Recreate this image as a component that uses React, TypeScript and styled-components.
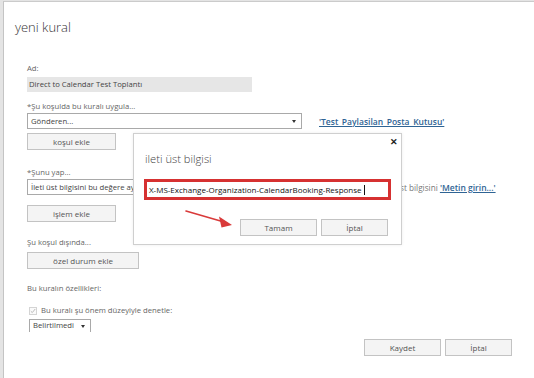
import React from 'react';
import styled, { createGlobalStyle } from 'styled-components';

const Global = createGlobalStyle`
  html, body, #root { height: 100%; margin: 0; }
  body {
    background: #e4e4e4;
    font-family: 'Open Sans', 'Noto Sans', sans-serif;
    overflow: hidden;
    color: #333;
  }
  * { box-sizing: border-box; }
`;

const Frame = styled.div`
  position: relative;
  height: calc(100% - 1px);
  margin: 1px 0 0 3px;
  background: #fff;
  border-top: 1px solid #cbcbcb;
  border-left: 1px solid #c4c4c4;
  padding: 0 0 0 23px;
  display: flex;
  flex-direction: column;
  align-items: flex-start;
`;

const Title = styled.h1`
  margin: 16px 0 0 -12px;
  font-size: 13px;
  line-height: 18px;
  font-weight: 300;
  color: #333;
`;

const Label = styled.div<{ $mt: number }>`
  margin-top: ${(p) => p.$mt}px;
  font-size: 7.7px;
  line-height: 11px;
  color: #666;
  white-space: nowrap;
`;

const NameInput = styled.div`
  margin-top: 3px;
  width: 225px;
  height: 15px;
  background: #e6e6e6;
  font-size: 7.7px;
  line-height: 15px;
  padding-left: 2px;
  color: #444;
  white-space: nowrap;
`;

const Row = styled.div<{ $mt: number }>`
  margin-top: ${(p) => p.$mt}px;
  display: flex;
  align-items: center;
`;

const Select = styled.div<{ $w: number; $h: number; $open?: boolean }>`
  position: relative;
  width: ${(p) => p.$w}px;
  height: ${(p) => p.$h}px;
  border: 1px solid #a9a9a9;
  border-bottom: ${(p) => (p.$open ? 'none' : '1px solid #a9a9a9')};
  background: #fff;
  font-size: 7.7px;
  line-height: ${(p) => p.$h - 2}px;
  padding-left: 3px;
  color: #444;
  white-space: nowrap;
  overflow: hidden;
  flex: none;
`;

const Caret = styled.span`
  position: absolute;
  right: 5px;
  top: 50%;
  margin-top: -1px;
  width: 0;
  height: 0;
  border-left: 2.5px solid transparent;
  border-right: 2.5px solid transparent;
  border-top: 3px solid #333;
`;

const Link = styled.span`
  color: #2f6494;
  text-decoration: underline;
  font-weight: 600;
  font-size: 8.5px;
`;

const Desc = styled.div<{ $ml: number }>`
  margin-left: ${(p) => p.$ml}px;
  font-size: 8.2px;
  color: #777;
  white-space: nowrap;
`;

const Button = styled.button<{ $w: number; $mt?: number }>`
  margin-top: ${(p) => p.$mt ?? 0}px;
  width: ${(p) => p.$w}px;
  height: 17px;
  border: 1px solid #c3c3c3;
  background: #f4f4f4;
  font-family: inherit;
  font-size: 8px;
  color: #555;
  padding: 0;
  flex: none;
`;

const Check = styled.span`
  width: 8px;
  height: 8px;
  border: 1px solid #d4d4d4;
  background: #fafafa;
  display: flex;
  align-items: center;
  justify-content: center;
  margin: 0 4px 0 2px;
`;

const Footer = styled.div`
  align-self: flex-end;
  margin: 7px 22px 0 0;
  display: flex;
  gap: 4px;
`;

const Modal = styled.div`
  position: absolute;
  left: 129px;
  top: 131px;
  width: 269px;
  height: 112px;
  background: #fff;
  border: 1px solid #cfcfcf;
  box-shadow: 0 0 3px rgba(0, 0, 0, 0.08);
  padding: 17px 13px 0 10px;
  display: flex;
  flex-direction: column;
`;

const Close = styled.span`
  position: absolute;
  right: 3px;
  top: 3px;
  font-size: 9px;
  font-weight: 700;
  line-height: 10px;
  color: #222;
`;

const ModalTitle = styled.div`
  font-size: 11.2px;
  font-weight: 300;
  line-height: 16px;
  color: #444;
  margin-left: 1px;
`;

const HeaderInput = styled.div`
  margin-top: 12px;
  width: 247px;
  height: 21px;
  border: 3px solid #d63131;
  padding-left: 2px;
  font-size: 8px;
  line-height: 15px;
  color: #111;
  white-space: nowrap;
  display: flex;
  align-items: center;
`;

const CaretBar = styled.span`
  display: inline-block;
  width: 1px;
  height: 10px;
  background: #111;
  margin-left: 2px;
`;

const ModalButtons = styled.div`
  margin-top: 19px;
  align-self: flex-end;
  display: flex;
  gap: 4px;
`;

const Arrow = styled.svg`
  position: absolute;
  left: 50px;
  top: 76px;
  overflow: visible;
`;

export default function App() {
  return (
    <>
      <Global />
      <Frame>
        <Title>yeni kural</Title>
        <Label $mt={27}>Ad:</Label>
        <NameInput>Direct to Calendar Test Toplantı</NameInput>
        <Label $mt={9}>*Şu koşulda bu kuralı uygula...</Label>
        <Row $mt={1}>
          <Select $w={275} $h={16}>
            Gönderen...
            <Caret />
          </Select>
          <Desc $ml={17}>
            <Link>'Test_Paylasilan_Posta_Kutusu'</Link>
          </Desc>
        </Row>
        <Button $w={89} $mt={4}>koşul ekle</Button>
        <Label $mt={17}>*Şunu yap...</Label>
        <Row $mt={1}>
          <Select $w={275} $h={16}>
            İleti üst bilgisini bu değere ayarla...
            <Caret />
          </Select>
          <Desc $ml={77}>
            İleti üst bilgisini <Link>'Metin girin...'</Link>
          </Desc>
        </Row>
        <Button $w={89} $mt={10}>işlem ekle</Button>
        <Label $mt={15}>Şu koşul dışında...</Label>
        <Button $w={112} $mt={4}>özel durum ekle</Button>
        <Label $mt={14}>Bu kuralın özellikleri:</Label>
        <Row $mt={11}>
          <Check>
            <svg width="6" height="6" viewBox="0 0 6 6">
              <path d="M0.8 3.2 L2.3 4.6 L5.2 1" fill="none" stroke="#b5b5b5" strokeWidth="0.9" />
            </svg>
          </Check>
          <Label $mt={0}>Bu kuralı şu önem düzeyiyle denetle:</Label>
        </Row>
        <Row $mt={3}>
          <Select $w={62} $h={13} $open style={{ marginLeft: 2 }}>
            Belirtilmedi
            <Caret />
          </Select>
        </Row>
        <Footer>
          <Button $w={77}>Kaydet</Button>
          <Button $w={67}>İptal</Button>
        </Footer>

        <Modal>
          <Close>✕</Close>
          <ModalTitle>ileti üst bilgisi</ModalTitle>
          <HeaderInput>
            X-MS-Exchange-Organization-CalendarBooking-Response
            <CaretBar />
          </HeaderInput>
          <ModalButtons>
            <Button $w={77}>Tamam</Button>
            <Button $w={67}>İptal</Button>
          </ModalButtons>
          <Arrow width="50" height="18" viewBox="0 0 50 18">
            <path d="M2 1 L40 12" stroke="#d93a3a" strokeWidth="1.6" strokeLinecap="round" />
            <path d="M48 15 L35 6.5 L37.5 17.5 Z" fill="#d93a3a" />
          </Arrow>
        </Modal>
      </Frame>
    </>
  );
}
